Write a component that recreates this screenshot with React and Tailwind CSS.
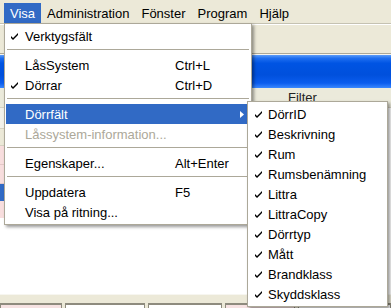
import React from 'react';

const Check = ({ color = '#000' }) => (
  <svg width="7" height="7" viewBox="0 0 7 7" className="block">
    <path d="M0 3 L2 5 L7 0 L7 2 L2 7 L0 5 Z" fill={color} />
  </svg>
);

const Arrow = () => (
  <svg width="4" height="7" viewBox="0 0 4 7" className="block">
    <path d="M0 0 L4 3.5 L0 7 Z" fill="#fff" />
  </svg>
);

const menuItems = [
  { label: 'Verktygsfält', check: true },
  'sep',
  { label: 'LåsSystem', sc: 'Ctrl+L' },
  { label: 'Dörrar', check: true, sc: 'Ctrl+D' },
  'sep',
  { label: 'Dörrfält', sub: true, active: true },
  { label: 'Låssystem-information...', disabled: true },
  'sep',
  { label: 'Egenskaper...', sc: 'Alt+Enter' },
  'sep',
  { label: 'Uppdatera', sc: 'F5' },
  { label: 'Visa på ritning...' },
];

const subItems = [
  'DörrID',
  'Beskrivning',
  'Rum',
  'Rumsbenämning',
  'Littra',
  'LittraCopy',
  'Dörrtyp',
  'Mått',
  'Brandklass',
  'Skyddsklass',
];

const SubMenu = () => (
  <div className="absolute left-[241px] top-[-3px] z-20 w-[141px] bg-white border border-[#ACA899] px-[1px] py-[2px] shadow-[2px_2px_3px_rgba(0,0,0,0.4)] text-black">
    {subItems.map((s) => (
      <div key={s} className="flex items-center h-[20px]">
        <div className="w-[19px] pl-[6px] shrink-0">
          <Check />
        </div>
        <span>{s}</span>
      </div>
    ))}
  </div>
);

const Dropdown = () => (
  <div className="absolute left-0 top-[20px] z-10 w-[248px] bg-white border border-[#ACA899] px-[1px] py-[2px] shadow-[2px_2px_3px_rgba(0,0,0,0.4)] text-black">
    {menuItems.map((it, i) => {
      if (it === 'sep') {
        return (
          <div key={i} className="pt-[3px] pb-[5px] px-[1px]">
            <div className="h-[1px] bg-[#ACA899]" />
          </div>
        );
      }
      const color = it.active ? 'text-white' : it.disabled ? 'text-[#ACA899]' : 'text-black';
      return (
        <div
          key={i}
          className={`relative flex items-center h-[20px] ${it.active ? 'bg-[#316AC5]' : ''} ${color}`}
        >
          <div className="w-[19px] pl-[5px] shrink-0">{it.check && <Check />}</div>
          <span className="w-[150px] shrink-0 whitespace-nowrap">{it.label}</span>
          {it.sc && <span className="whitespace-nowrap">{it.sc}</span>}
          {it.sub && (
            <div className="ml-[65px]">
              <Arrow />
            </div>
          )}
          {it.sub && <SubMenu />}
        </div>
      );
    })}
  </div>
);

const App = () => {
  return (
    <div className="relative w-[391px] h-[308px] overflow-hidden bg-white flex flex-col font-['Liberation_Sans',Arial,sans-serif] text-[13px] leading-none">
      {/* menubar */}
      <div className="h-[23px] shrink-0 bg-[#ECE9D8] flex items-start pt-[3px] pl-[4px] text-black">
        <div className="relative h-[20px] px-[6px] flex items-center bg-[#316AC5] text-white">
          Visa
          <Dropdown />
        </div>
        <div className="h-[20px] px-[6px] flex items-center">Administration</div>
        <div className="h-[20px] px-[6px] flex items-center">Fönster</div>
        <div className="h-[20px] px-[6px] flex items-center">Program</div>
        <div className="h-[20px] px-[6px] flex items-center">Hjälp</div>
      </div>
      <div className="h-[1px] shrink-0 bg-[#C5C2B2]" />
      <div className="h-[1px] shrink-0 bg-white" />

      {/* toolbar */}
      <div className="h-[28px] shrink-0 bg-[#ECE9D8]" />
      <div className="h-[1px] shrink-0 bg-[#ACA899]" />
      <div className="h-[1px] shrink-0 bg-[#F5F4EE]" />

      {/* blue caption bar */}
      <div className="h-[33px] shrink-0 bg-[linear-gradient(to_bottom,#5c9cf8_0%,#1e6ef0_10%,#0054e3_25%,#0050dc_60%,#0a5cee_85%,#3a88ff_100%)]" />

      {/* list header */}
      <div className="h-[20px] shrink-0 bg-[#EBEADB] border-b border-[#D6D2C2] flex items-center text-[#222]">
        <span className="ml-[288px]">Filter</span>
      </div>

      {/* rows */}
      <div className="w-[240px] h-[21px] shrink-0 bg-[#F3F2EA] border-b border-[#D6D2C2]" />
      <div className="w-[240px] h-[17px] shrink-0 bg-[#ECE9D8] border-b border-[#D6D2C2]" />
      <div className="w-[240px] h-[19px] shrink-0 bg-[#F8DEDE] border-b border-[#E4C8C8]" />
      <div className="w-[240px] h-[19px] shrink-0 bg-[#F8DEDE] border-b border-[#E4C8C8]" />
      <div className="w-[240px] h-[17px] shrink-0 bg-[#316AC5]" />
      <div className="w-[240px] h-[17px] shrink-0 bg-[#F8DEDE]" />

      <div className="h-[76px] shrink-0 bg-white" />

      {/* bottom strip */}
      <div className="h-[1px] shrink-0 bg-[#F7F6F0]" />
      <div className="h-[8px] shrink-0 bg-[#ECE9D8]" />
      <div className="h-[20px] shrink-0 bg-[#ECE9D8] flex gap-[3px]">
        <div className="w-[62px] bg-[#F6E2E2] border border-t-2 border-[#8E8B7E]" />
        <div className="w-[80px] bg-white border border-t-2 border-[#8E8B7E]" />
        <div className="w-[74px] bg-white border border-t-2 border-[#8E8B7E]" />
        <div className="w-[70px] bg-[#F6E2E2] border border-t-2 border-[#8E8B7E]" />
        <div className="flex-1 bg-white border border-t-2 border-[#8E8B7E]" />
      </div>
    </div>
  );
};

export default App;
